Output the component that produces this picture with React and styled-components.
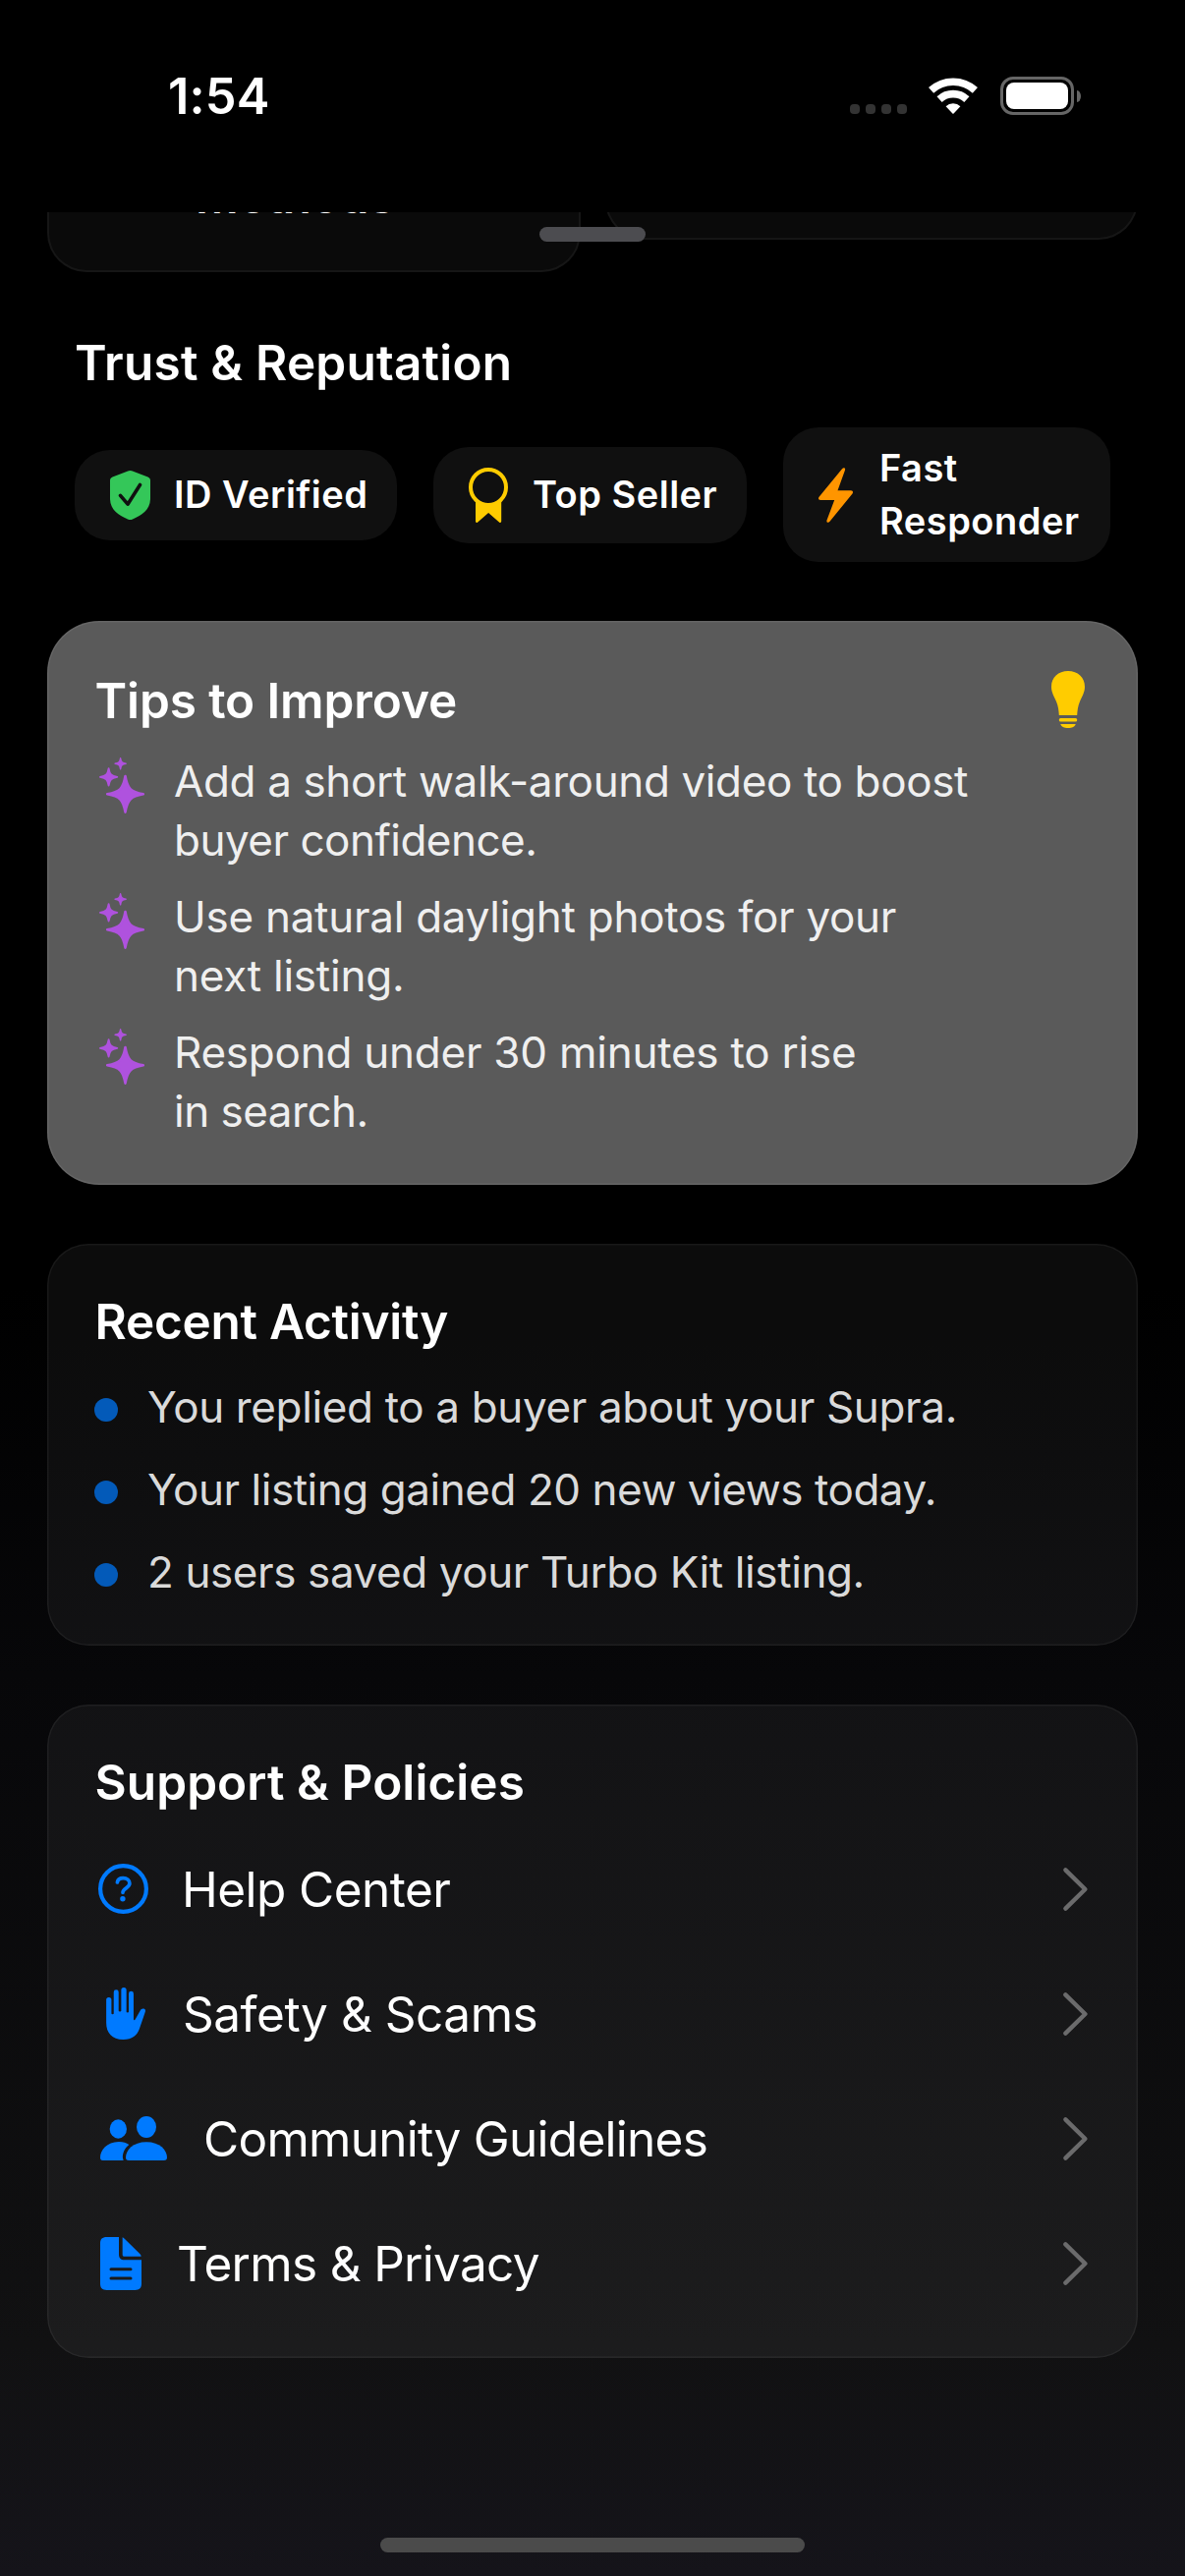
import React from "react";
import styled, { createGlobalStyle } from "styled-components";

const GlobalStyle = createGlobalStyle`
  *, *::before, *::after { box-sizing: border-box; }
  html, body { margin: 0; background: #000; }
  body { font-family: Inter, "Liberation Sans", sans-serif; color: #fff; }
  svg { display: block; flex: none; overflow: visible; }
`;

const Screen = styled.div`
  position: relative;
  display: flex;
  flex-direction: column;
  width: 1206px;
  height: 2622px;
  overflow: hidden;
  background: linear-gradient(180deg, #000 0%, #000 50%, #070709 65%, #111112 91%, #15141a 100%);
`;

const StatusBar = styled.header`
  display: flex;
  justify-content: space-between;
  height: 216px;
  padding: 68px 106px 0 171px;
  background: #000;
`;

const Clock = styled.time`
  font-size: 50.5px;
  line-height: 60px;
  font-weight: 600;
  letter-spacing: 0.2px;
`;

const StatusIcons = styled.div`
  display: flex;
  align-items: flex-start;
  padding-top: 10px;
`;

const SignalDots = styled.div`
  display: flex;
  gap: 6px;
  margin: 28px 22px 0 0;
`;

const SignalDot = styled.span`
  width: 10px;
  height: 10px;
  border-radius: 4px;
  background: #333;
`;

const WifiIcon = styled.svg`
  margin-top: 1px;
`;

const BatteryWrap = styled.div`
  display: flex;
  align-items: center;
  gap: 3px;
  margin-left: 23px;
`;

const BatteryShell = styled.div`
  width: 75px;
  height: 39px;
  padding: 3px;
  border: 3px solid #666;
  border-radius: 13px;
`;

const BatteryFill = styled.div`
  height: 27px;
  border-radius: 8px;
  background: #fff;
`;

const BatteryCap = styled.span`
  width: 4px;
  height: 12px;
  border-radius: 0 4px 4px 0 / 0 6px 6px 0;
  background: #666;
`;

const Grabber = styled.div`
  position: absolute;
  top: 231px;
  left: 549px;
  width: 108px;
  height: 15px;
  border-radius: 8px;
  background: #4c4c50;
`;

const ActionRow = styled.div`
  display: grid;
  grid-template-columns: 1fr 1fr;
  align-items: start;
  gap: 25px;
  height: 61px;
  padding: 0 48px;
  overflow: hidden;
`;

const ActionCard = styled.div`
  height: ${(p) => p.$height}px;
  margin-top: -99px;
  padding: 51px 0 0 149px;
  border: 2px solid rgba(255, 255, 255, 0.05);
  border-radius: 40px;
  background: rgba(255, 255, 255, 0.038);
  font-size: 47.5px;
  line-height: 60px;
  font-weight: 600;
`;

const Content = styled.main`
  display: flex;
  flex-direction: column;
  gap: 60px;
  padding: 62px 48px 0;
`;

const Trust = styled.section`
  display: flex;
  flex-direction: column;
  gap: 36px;
  padding: 0 28px;
`;

const Title = styled.h2`
  margin: 0 0 0 ${(p) => p.$shift || 0}px;
  font-size: 49.5px;
  line-height: 60px;
  font-weight: 600;
  letter-spacing: ${(p) => p.$track}px;
  white-space: nowrap;
`;

const BadgeRow = styled.div`
  display: flex;
  align-items: center;
  gap: 37px;
  height: 137px;
`;

const Badge = styled.div`
  display: flex;
  align-items: center;
  gap: ${(p) => p.$gap}px;
  width: ${(p) => p.$width}px;
  height: ${(p) => p.$height}px;
  padding-left: 36px;
  border-radius: 36px;
  background: #101010;
`;

const BadgeLabel = styled.span`
  margin-top: -2px;
  font-size: 38px;
  line-height: 54px;
  font-weight: 600;
  letter-spacing: 0.5px;
  white-space: nowrap;
`;

const Card = styled.section`
  display: flex;
  flex-direction: column;
  height: ${(p) => p.$height}px;
  padding: ${(p) => p.$top}px 50px 0;
  border-radius: ${(p) => (p.$bright ? 53 : 42)}px;
  background: ${(p) => (p.$bright ? "#5a5a5a" : "rgba(255, 255, 255, 0.048)")};
  box-shadow: inset 0 0 0 1.5px rgba(255, 255, 255, ${(p) => (p.$bright ? 0.07 : 0.055)});
`;

const CardHeader = styled.div`
  display: flex;
  justify-content: space-between;
  padding-right: 4px;
`;

const TipList = styled.ul`
  display: flex;
  flex-direction: column;
  gap: 18px;
  margin: 22px 0 0;
  padding: 0;
  list-style: none;
`;

const Tip = styled.li`
  display: flex;
  align-items: flex-start;
  gap: 30px;
  padding-left: 3px;
  font-size: 44px;
  line-height: 60px;
  color: #efefef;
  svg { margin-top: 6px; }
`;

const Line = styled.span`
  display: block;
  letter-spacing: ${(p) => p.$track}px;
  white-space: nowrap;
`;

const ActivityList = styled.ul`
  display: flex;
  flex-direction: column;
  gap: 24px;
  margin: 27px 0 0;
  padding: 0;
  list-style: none;
`;

const Activity = styled.li`
  display: flex;
  align-items: center;
  gap: 30px;
  margin-left: -2px;
  font-size: 44px;
  line-height: 60px;
  color: #dadada;
`;

const Bullet = styled.span`
  width: 24px;
  height: 24px;
  margin-top: 6px;
  border-radius: 50%;
  background: #035ab9;
`;

const LinkList = styled.nav`
  display: flex;
  flex-direction: column;
  margin-top: 15px;
`;

const LinkRow = styled.a`
  display: flex;
  align-items: center;
  height: 127px;
  padding-right: 1px;
  font-size: 49.5px;
  line-height: 60px;
  color: #fff;
`;

const LinkIcon = styled.span`
  width: ${(p) => p.$width}px;
  padding-left: ${(p) => p.$inset}px;
`;

const LinkLabel = styled.span`
  flex: 1;
  letter-spacing: ${(p) => p.$track}px;
`;

const HomeIndicator = styled.div`
  align-self: center;
  width: 432px;
  height: 15px;
  margin: auto 0 24px;
  border-radius: 8px;
  background: #4b4b4b;
`;

const BLUE = "#007aff";

const Wifi = () => (
  <WifiIcon width="50" height="37" viewBox="0 0 50 37" fill="none" stroke="#fff">
    <path d="M2.6 12.9A33.2 33.2 0 0 1 47.4 12.9" strokeWidth="7.6" />
    <path d="M11.1 22.1A20.4 20.4 0 0 1 38.9 22.1" strokeWidth="7.6" />
    <path d="M17.6 29.2A11 11 0 0 1 32.4 29.2L25.6 36.4Q25 37 24.4 36.4Z" fill="#fff" stroke="none" />
  </WifiIcon>
);

const ShieldCheck = () => (
  <svg width="41" height="50" viewBox="0 0 41 50">
    <path
      d="M17.5.8C19.5-.2 21.5-.2 23.5.8L38.5 6.4C40.3 7.2 41 8.2 41 10V28C41 40 33 45 23 49.5C21 50.3 20 50.3 18 49.5C8 45 0 40 0 28V10C0 8.2.7 7.2 2.5 6.4Z"
      fill="#34c759"
    />
    <path d="M10.5 25.3L18 34.2L30.5 14.5" fill="none" stroke="#101010" strokeWidth="3.6" strokeLinecap="round" strokeLinejoin="round" />
  </svg>
);

const Rosette = () => (
  <svg width="40" height="56" viewBox="0 0 40 56">
    <circle cx="20" cy="20" r="18" fill="none" stroke="#ffcc00" strokeWidth="4" />
    <path d="M7 34Q20 43 33.2 34V54.6C33.2 56 32 56.3 31 55.4L20.1 46L9.2 55.4C8.2 56.3 7 56 7 54.6Z" fill="#ffcc00" />
  </svg>
);

const Bolt = () => (
  <svg width="35" height="56" viewBox="0 0 35 56">
    <path
      d="M24 1.3C25.5-.7 27.7 0 27 2.6L19.5 23.3H33C35 23.3 35.5 25 34.5 26.5L11.5 54.7C10 56.7 7.8 55.8 8.5 53.4L16.2 33H2C0 33-.5 31.2.6 29.7Z"
      fill="#ff9500"
    />
  </svg>
);

const Bulb = () => (
  <svg width="34" height="58" viewBox="0 0 34 58" fill="#ffcc00">
    <path d="M17 0C27 0 34 6.5 34 16C34 22 31 26 29 31C27 36 26.5 40 26.2 45H7.8C7.5 40 7 36 5 31C3 26 0 22 0 16C0 6.5 7 0 17 0Z" />
    <rect x="7.8" y="48" width="18.4" height="3.6" rx="1.6" />
    <path d="M9.3 54H24.7C24 56.8 21 58 17 58C13 58 10 56.8 9.3 54Z" />
  </svg>
);

const starPath = (x, y, r) =>
  `M${x} ${y - r}C${x + r * 0.12} ${y - r * 0.3} ${x + r * 0.3} ${y - r * 0.12} ${x + r} ${y}` +
  `C${x + r * 0.3} ${y + r * 0.12} ${x + r * 0.12} ${y + r * 0.3} ${x} ${y + r}` +
  `C${x - r * 0.12} ${y + r * 0.3} ${x - r * 0.3} ${y + r * 0.12} ${x - r} ${y}` +
  `C${x - r * 0.3} ${y - r * 0.12} ${x - r * 0.12} ${y - r * 0.3} ${x} ${y - r}Z`;

const Sparkles = () => (
  <svg width="46" height="57" viewBox="0 0 46 57" fill="#af52de" stroke="#af52de" strokeLinejoin="round">
    <path d={starPath(26.5, 37.3, 18.3)} strokeWidth="2.6" />
    <path d={starPath(9.6, 19.8, 8.7)} strokeWidth="1.8" />
    <path d={starPath(21.6, 6.3, 5.5)} strokeWidth="1.4" />
  </svg>
);

const HelpIcon = () => (
  <svg width="51" height="51" viewBox="0 0 51 51" fill="none" stroke={BLUE}>
    <circle cx="25.5" cy="25.5" r="23.4" strokeWidth="4.2" />
    <path d="M19.4 19C19.8 16.3 22.2 14.7 25.4 14.7C29.2 14.7 31.9 16.9 31.9 20.1C31.9 24.9 25 24.8 25 29.3" strokeWidth="3.7" strokeLinecap="round" />
    <circle cx="24.9" cy="35.7" r="2.7" fill={BLUE} stroke="none" />
  </svg>
);

const HandIcon = () => (
  <svg width="40" height="53" viewBox="0 0 120 160" fill={BLUE}>
    <path d="M0 38a8 8 0 0 1 16 0V80a3.5 2 0 0 0 7 0V14.5a7.5 7.5 0 0 1 15 0V72a4 2 0 0 0 8 0V8a8 8 0 0 1 16 0V75a3.5 2 0 0 0 7 0V18.5a7.5 7.5 0 0 1 15 0V98c0 3 3 3 5 0L104 72c3-7 9-8 13-6c4 2 4 7 2 11L102 127C94 148 80 160 52 160C18 160 0 140 0 108Z" />
  </svg>
);

const PeopleIcon = () => (
  <svg width="68" height="45" viewBox="0 0 204 135" fill={BLUE}>
    <ellipse cx="55" cy="39" rx="26" ry="29" />
    <ellipse cx="141" cy="33" rx="30" ry="33" />
    <path d="M8 135C2 135 0 132 0 126C0 104 20 78 57 78C70 78 80 82 88 87C74 98 67 115 69 128L71 135Z" />
    <path d="M88 135C80 135 78 132 78 126C78 104 100 79 141 79C182 79 204 104 204 126C204 132 201 135 194 135Z" />
  </svg>
);

const DocIcon = () => (
  <svg width="42" height="54" viewBox="0 0 126 162" fill={BLUE}>
    <path d="M20 0H57V52C57 64 62 70 74 70H126V142C126 156 120 162 106 162H20C6 162 0 156 0 142V20C0 6 6 0 20 0Z" />
    <path d="M68 1C71 2 73 4 75 6L120 50C123 53 125 56 125 59H74C70 59 68 57 68 53Z" />
    <path d="M33 98H93M33 126H93" stroke="#1a1a1b" strokeWidth="9" strokeLinecap="round" />
  </svg>
);

const Chevron = () => (
  <svg width="25" height="44" viewBox="0 0 25 44">
    <path d="M2.4 2.4L22.4 22L2.4 41.6" fill="none" stroke="#6b6b6c" strokeWidth="4.4" strokeLinecap="round" strokeLinejoin="round" />
  </svg>
);

const tips = [
  [["Add a short walk-around video to boost", -0.37], ["buyer confidence.", -0.5]],
  [["Use natural daylight photos for your", -0.27], ["next listing.", -0.25]],
  [["Respond under 30 minutes to rise", -0.24], ["in search.", -0.5]],
];

const activities = [
  ["You replied to a buyer about your Supra.", -0.36],
  ["Your listing gained 20 new views today.", -0.46],
  ["2 users saved your Turbo Kit listing.", -0.4],
];

const links = [
  { label: "Help Center", icon: <HelpIcon />, width: 87, inset: 2, track: -0.55 },
  { label: "Safety & Scams", icon: <HandIcon />, width: 88, inset: 10, track: -0.47 },
  { label: "Community Guidelines", icon: <PeopleIcon />, width: 109, inset: 4, track: -0.72 },
  { label: "Terms & Privacy", icon: <DocIcon />, width: 82, inset: 4, track: -0.68 },
];

export default function App() {
  return (
    <Screen>
      <GlobalStyle />
      <StatusBar>
        <Clock>1:54</Clock>
        <StatusIcons>
          <SignalDots>
            <SignalDot />
            <SignalDot />
            <SignalDot />
            <SignalDot />
          </SignalDots>
          <Wifi />
          <BatteryWrap>
            <BatteryShell>
              <BatteryFill />
            </BatteryShell>
            <BatteryCap />
          </BatteryWrap>
        </StatusIcons>
      </StatusBar>

      <ActionRow>
        <ActionCard $height={160}>Methods</ActionCard>
        <ActionCard $height={127} />
      </ActionRow>
      <Grabber />

      <Content>
        <Trust>
          <Title $track={0.22}>Trust &amp; Reputation</Title>
          <BadgeRow>
            <Badge $width={328} $height={92} $gap={24}>
              <ShieldCheck />
              <BadgeLabel>ID Verified</BadgeLabel>
            </Badge>
            <Badge $width={319} $height={98} $gap={25}>
              <Rosette />
              <BadgeLabel>Top Seller</BadgeLabel>
            </Badge>
            <Badge $width={333} $height={137} $gap={27}>
              <Bolt />
              <BadgeLabel>
                Fast
                <br />
                Responder
              </BadgeLabel>
            </Badge>
          </BadgeRow>
        </Trust>

        <Card $height={574} $top={51} $bright>
          <CardHeader>
            <Title $track={-0.1} $shift={-1.5}>Tips to Improve</Title>
            <Bulb />
          </CardHeader>
          <TipList>
            {tips.map((lines) => (
              <Tip key={lines[0][0]}>
                <Sparkles />
                <div>
                  {lines.map(([text, track]) => (
                    <Line key={text} $track={track}>{text}</Line>
                  ))}
                </div>
              </Tip>
            ))}
          </TipList>
        </Card>

        <Card $height={409} $top={49}>
          <Title $track={-0.26} $shift={-1.5}>Recent Activity</Title>
          <ActivityList>
            {activities.map(([text, track]) => (
              <Activity key={text}>
                <Bullet />
                <Line $track={track}>{text}</Line>
              </Activity>
            ))}
          </ActivityList>
        </Card>

        <Card $height={665} $top={49}>
          <Title $track={0.08} $shift={-1.5}>Support &amp; Policies</Title>
          <LinkList>
            {links.map((l) => (
              <LinkRow key={l.label}>
                <LinkIcon $width={l.width} $inset={l.inset}>{l.icon}</LinkIcon>
                <LinkLabel $track={l.track}>{l.label}</LinkLabel>
                <Chevron />
              </LinkRow>
            ))}
          </LinkList>
        </Card>
      </Content>
      <HomeIndicator />
    </Screen>
  );
}
